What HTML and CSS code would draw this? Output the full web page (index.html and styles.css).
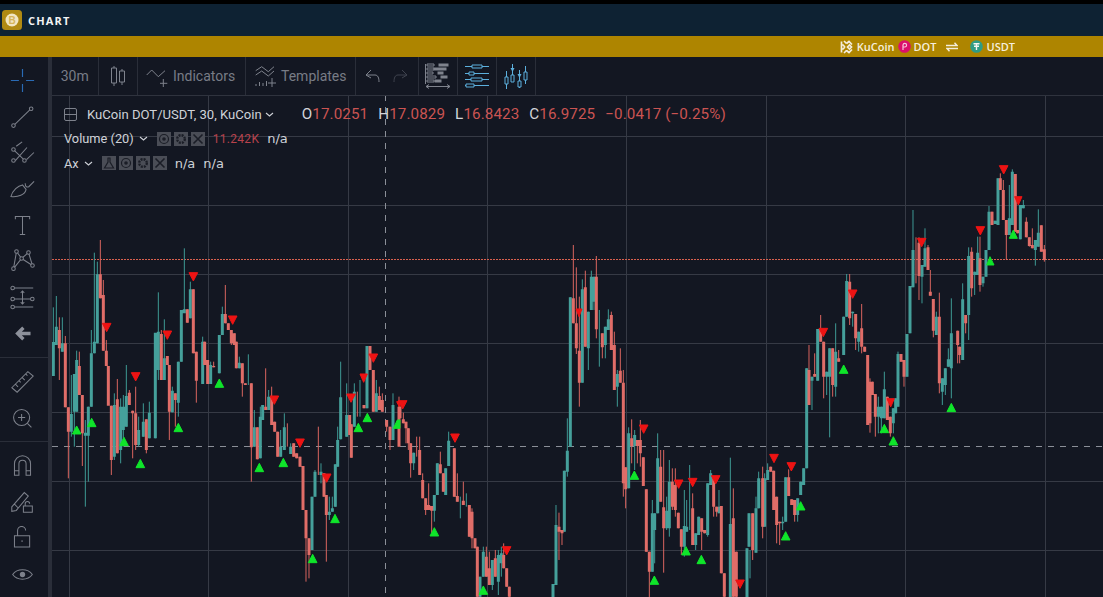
FILE: index.html
```html
<!DOCTYPE html>
<html lang="en">
<head>
<meta charset="utf-8">
<title>Chart</title>
<link rel="stylesheet" href="styles.css">
</head>
<body>
<div class="app">
  <header class="topbar">
    <span class="logo"><svg width="22" height="22" viewBox="0 0 22 22"><rect width="20" height="20" x="1" y="1" rx="3.500" fill="#b08a12"/><circle cx="11" cy="11" r="6.500" fill="#f2e6c2"/><text x="11" y="14.500" class="logo-b">B</text></svg></span>
    <span class="brand">CHART</span>
  </header>
  <div class="goldbar">
    <svg class="gold-ic ku" width="13" height="14" viewBox="0 0 13 14"><path d="M1.500 1.500V12.500M5 7L2.500 4.500M5 7L2.500 9.500M6.500 3.500L4 1M6.500 10.500L4 13M6.500 3.500L9 1.500L12 4.500M6.500 10.500L9 12.500L12 9.500M7.500 7L9.500 5L11.500 7L9.500 9Z" fill="none" stroke="#f4eddc" stroke-width="1.700"/></svg>
    <span>KuCoin</span>
    <svg class="gold-ic" width="13" height="13" viewBox="0 0 13 13"><circle cx="6.500" cy="6.500" r="6.300" fill="#dc0f6c"/><path d="M5 10V5A1.800 1.800 0 1 1 7 7H5.500" fill="none" stroke="#f6c6dc" stroke-width="1.200"/></svg>
    <span>DOT</span>
    <svg class="swap" width="12" height="10" viewBox="0 0 12 10"><path d="M0 3.500H11L8.500 .8M12 6.500H1L3.500 9.200" fill="none" stroke="#f4eddc" stroke-width="1.400"/></svg>
    <svg class="gold-ic tether" width="13" height="13" viewBox="0 0 13 13"><circle cx="6.500" cy="6.500" r="6.300" fill="#2f9c85"/><path d="M3.500 3.800H9.500M6.500 3.800V10M4 6.300H9" fill="none" stroke="#f4f4f0" stroke-width="1.400"/></svg>
    <span>USDT</span>
  </div>
  <div class="main">
    <aside class="sidebar">
      <div class="tool-group">
        <svg class="tool cross-tool" viewBox="0 0 28 28"><path d="M1 14H10M18 14H27M14 1V10M14 18V27"/></svg>
        <svg class="tool" viewBox="0 0 28 28"><path d="M5.400 22.800L22.200 6.700"/><circle cx="3.900" cy="24.200" r="2"/><circle cx="23.700" cy="5.300" r="2"/></svg>
        <svg class="tool" viewBox="0 0 28 28"><path d="M7 7L13.600 2M6 23L19 8.400M18.500 22L26.800 14M5 12L15 21.500"/><circle cx="3.900" cy="10.600" r="2"/><circle cx="3.900" cy="23" r="2"/><circle cx="16.200" cy="23" r="2"/></svg>
        <svg class="tool" viewBox="0 0 28 28"><path d="M1 23C3 16 9 11 14 10L18 15C17 21 9 24 1 23ZM17 8C17 12 19 13 21 12L27 6"/></svg>
        <svg class="tool" viewBox="0 0 28 28"><path d="M6 7V4H22V7M14 4V24M11 24H17"/></svg>
        <svg class="tool" viewBox="0 0 28 28"><path d="M7.300 2.800L13 10.600L20.700 3.900L25.200 18.500L13 10.600L3.900 22ZM7.300 2.800L3.900 22"/><circle class="fill-bg" cx="3.900" cy="22" r="2"/><circle class="fill-bg" cx="7.300" cy="2.800" r="2"/><circle class="fill-bg" cx="13" cy="10.600" r="2"/><circle class="fill-bg" cx="20.700" cy="3.900" r="2"/><circle class="fill-bg" cx="25.200" cy="18.500" r="2"/></svg>
        <svg class="tool" viewBox="0 0 28 28"><path d="M5 3.400H26M5 15.700H23M5 24.600H26M14 6.700V21.300M12 8.700L14 6.700L16 8.700M12 19.300L14 21.300L16 19.300"/><circle cx="3" cy="3.400" r="2"/><circle cx="3" cy="15.700" r="2"/><circle cx="25" cy="15.700" r="2"/><circle cx="3" cy="24.600" r="2"/></svg>
        <svg class="tool tool-arrow" viewBox="0 0 28 28"><path d="M23 14H9M15 7.500L8.500 14L15 20.500"/></svg>
      </div>
      <div class="tool-group">
        <svg class="tool" viewBox="0 0 28 28"><path d="M2 21L20 3L26 8L8 26ZM6 17L9 20M10 13L12 15M13.500 9.500L16.500 12.500M17.500 5.500L19.500 7.500"/></svg>
        <svg class="tool" viewBox="0 0 28 28"><circle cx="13" cy="14" r="9"/><path d="M19.500 20.500L24 25M9 14H17M13 10V18"/></svg>
      </div>
      <div class="tool-group tool-group-last">
        <svg class="tool" viewBox="0 0 28 28"><path d="M5 25V12A9 9 0 0 1 23 12V25H18V12A4 4 0 0 0 10 12V25ZM5 20H10M18 20H23"/></svg>
        <svg class="tool" viewBox="0 0 28 28"><path d="M2 20L16 4L20.500 8L7 24L2 25ZM5 17L9 21M15 26V19H25V26ZM17 19V16.500A2.500 2.500 0 0 1 22 16.500"/></svg>
        <svg class="tool" viewBox="0 0 28 28"><path d="M5 11H22V23.500H5ZM8.500 11V5A4.500 4.500 0 0 1 17.500 5M13.500 16V18"/></svg>
        <svg class="tool" viewBox="0 0 28 28"><path d="M3 14C8 7 20 7 25 14C20 21 8 21 3 14Z"/><circle class="dot" cx="14" cy="14" r="3"/></svg>
      </div>
    </aside>
    <div class="workspace">
      <nav class="toolbar">
        <span class="tb-item tb-text">30m</span>
        <span class="tb-item tb-icon"><svg class="tb-svg" width="14" height="20" viewBox="0 0 14 20"><path d="M3 0V2M3 17V20M.5 2H5.500V17H.5ZM11 3V5M11 16V19M8.500 5H13.500V16H8.500Z"/></svg></span>
        <span class="tb-item tb-label"><svg class="tb-svg" width="22" height="22" viewBox="0 0 22 22"><path d="M.7 10L5.700 5L12.300 11.700L19 5.700M14 18.300H21.300M17.300 14V22"/></svg>Indicators</span>
        <span class="tb-item tb-label"><svg class="tb-svg" width="22" height="22" viewBox="0 0 22 22"><path d="M.7 5.700L6.700 1.700L13.300 6.700L19 1.700M.7 10L6.700 6L13.300 11L19 6M1 19V21M4.500 17V21M8 18V21M11.500 16V21M13 18H21M17 13V22"/></svg>Templates</span>
        <span class="tb-item tb-undo">
          <svg class="tb-svg" width="16" height="14" viewBox="0 0 16 14"><path d="M6 1L1 6L6 9M1 6H10C13 6 14 9 14 13"/></svg>
          <svg class="tb-svg faded" width="16" height="14" viewBox="0 0 16 14"><path d="M10 1L15 6L10 9M15 6H6C3 6 2 9 2 13"/></svg>
        </span>
        <span class="tb-item tb-big"><svg class="tb-svg" width="26" height="28" viewBox="0 0 26 28"><path d="M.5 2V22M2 2H9V4H2ZM2 6H9V8H2ZM2 10H8V12H2ZM2 14H11V16H2ZM2 18H9V20H2ZM1 24.500H25M1 24.500L4 22.500M1 24.500L4 26.500M25 24.500L22 22.500M25 24.500L22 26.500"/><path class="solid" d="M13.500 1.500H23.500V4.500H13.500ZM8.500 5.500H21.500V8.500H8.500ZM12.500 9.500H18.500V12.500H12.500ZM15.500 13.500H22.500V16.500H15.500ZM9.500 17.500H16.500V20.500H9.500Z"/></svg></span>
        <span class="tb-item tb-big"><svg class="tb-svg blue" width="26" height="26" viewBox="0 0 26 26"><path d="M1 3.500H25M1 10.500H25M1 16.500H25M1 22.500H25"/><path class="blue-box" d="M8 2H18V5H8ZM5 9H10V12H5ZM7 15H18V18H7ZM2 21H10V24H2Z"/></svg></span>
        <span class="tb-item tb-big"><svg class="tb-svg blue" width="24" height="26" viewBox="0 0 24 26"><path d="M2.500 8V26M8.500 1V19M15.500 7V25M21.500 3V21"/><path class="blue-box" d="M1 14H4V21H1ZM7 12H10V19H7ZM14 18H17V24H14ZM20 9H23V17H20Z"/><path class="blue-solid" d="M6.500 5H10.500L8.500 9ZM13.500 11H17.500L15.500 15Z"/></svg></span>
      </nav>
      <section class="chart">
        <svg class="plot" width="1051" height="501" viewBox="52 96 1051 501">
          <path class="grid" d="M69.500 95V597M208.500 95V597M348.500 95V597M487.500 95V597M626.500 95V597M766.500 95V597M905.500 95V597M1045.500 95V597M52 136.500H1103M52 205.500H1103M52 274.500H1103M52 343.500H1103M52 412.500H1103M52 481.500H1103M52 550.500H1103"/>
          <path class="cross" d="M385.500 95V597M52 446.500H1103"/>
          <path class="last" d="M52 259.500H1103"/>
          <g transform="translate(50 230) scale(.33333)">
            <path class="w-g" d="M10 232V438M19 198V345M37 262V365M64 435V620M73 432V650M80 362V545M106 570V830M115 530V755M124 300V530M133 68V370M142 95V340M193 490V690M212 505V700M220 495V650M229 405V590M266 560V650M280 520V620M298 515V625M316 340V625M325 187V450M343 268V450M367 470V547M385 395V560M394 240V395M403 55V240M421 155V265M458 320V462M482 395V462M508 315V430M517 230V315M568 380V415M595 373V465M613 540V650M631 530V685M638 525V570M656 480V540M692 600V680M703 550V660M722 640V672M786 800V960M795 720V800M813 700V760M838 800V870M847 800V845M856 703V830M863 590V710M872 395V628M890 460V620M913 460V590M930 450V560M951 348V535M979 450V545M1029 490V630"/>
            <path class="b-g" d="M10 336V438M19 290V345M37 340V365M64 552V605M73 432V545M80 390V545M106 608V617M115 530V617M124 370V530M133 335V370M142 133V340M193 525V680M212 530V660M220 530V600M229 498V590M266 600V645M280 575V620M298 548V625M316 308V625M325 305V420M343 385V450M367 482V547M385 395V518M394 240V395M403 238V250M421 178V265M458 335V462M482 405V462M508 315V430M517 252V315M568 398V415M613 592V650M631 560V685M638 525V570M656 500V540M692 650V680M703 592V660M722 650V672M786 800V960M795 725V800M813 725V735M838 845V855M847 835V845M856 703V830M863 630V710M872 502V628M890 555V620M913 485V590M951 348V535M979 490V545M1029 525V630"/>
            <path class="w-r" d="M28 262V450M46 318V532M55 532V745M88 365V495M97 495V708M151 30V205M160 150V362M169 330V408M184 527V735M202 447V670M238 480V525M248 542V685M257 470V660M289 568V670M334 300V450M352 378V405M358 405V630M376 490V590M412 238V278M430 178V370M439 365V518M464 335V405M473 390V462M491 395V412M526 165V280M535 280V300M544 300V345M553 310V345M559 335V415M577 400V500M586 460V465M604 460V755M622 592V688M647 415V540M665 470V585M674 575V605M683 605V680M712 580V650M731 640V680M740 670V685M750 680V710M759 708V840M768 840V1055M777 925V1045M805 590V735M822 730V800M829 795V995M899 555V615M904 583V683M922 485V560M942 525V535M960 348V420M970 420V545M988 470V540M997 490V545M1010 570V605M1020 590V660M1047 500V650"/>
            <path class="b-r" d="M28 300V355M46 340V532M55 532V605M88 408V495M97 495V610M151 133V205M160 195V362M169 362V408M175 408V527M184 527V690M202 508V670M238 488V525M248 542V550M257 550V645M289 568V660M334 312V450M352 378V405M358 405V545M376 490V510M412 238V278M430 178V370M439 365V452M464 335V405M473 390V462M491 408V412M526 252V280M535 280V300M544 300V340M553 310V345M559 335V415M577 400V460M586 460V465M604 460V652M622 592V688M647 530V540M665 500V585M674 575V605M683 605V680M731 640V680M740 670V685M750 680V710M759 708V840M768 840V925M777 925V975M822 730V800M829 795V855M899 555V615M904 583V683M942 525V535M960 348V420M970 420V545M988 498V540M997 510V545M1010 570V590M1020 590V630M1047 530V650"/>
            <path class="tri-d" d="M417 128H443L430 153ZM157 280H183L170 305ZM339 303H365L352 328ZM244 428H270L257 453ZM535 258H561L548 283ZM660 498H686L673 523ZM737 627H763L750 652ZM817 732H843L830 757ZM890 492H916L903 517ZM930 432H952L941 457ZM957 372H983L970 397ZM1040 515H1050V535Z"/>
            <path class="tri-u" d="M67 612H93L80 588ZM112 590H138L125 565ZM209 647H235L222 622ZM258 713H284L271 688ZM372 605H398L385 580ZM495 472H521L508 447ZM615 725H641L628 700ZM687 710H713L700 685ZM775 998H801L788 973ZM842 878H868L855 853ZM912 605H938L925 580ZM939 575H965L952 550ZM1030 595H1050V570H1042Z"/>
          </g>
          <g transform="translate(400 230) scale(.33333)">
            <path class="w-g" d="M41 668V720M103 795V875M112 700V795M137 715V795M146 605V708M181 800V865M199 790V830M240 1040V1101M250 950V1040M277 990V1080M295 960V1095M304 950V1040M459 1062V1101M468 825V1065M493 722V905M502 565V740M511 202V650M547 148V458M565 245V420M574 122V240M582 140V240M598 240V410M616 290V385M625 238V300M652 420V530M686 592V775M704 600V720M757 810V1025M764 850V1000M773 610V850M800 800V900M808 690V920M853 780V980M860 810V905M869 705V900M887 910V960M896 860V915M923 760V920M932 720V765M957 780V850M991 683V1101M1041 955V1101M1047 850V950"/>
            <path class="b-g" d="M41 668V700M103 795V842M112 700V795M137 715V795M146 632V708M240 1040V1100M250 965V1040M277 990V1065M295 975V1055M304 970V1000M459 1062V1101M468 885V1065M493 722V905M502 662V725M511 202V650M547 178V458M565 245V355M574 140V240M582 140V215M616 290V345M625 268V300M652 432V470M686 610V775M704 615V648M757 850V1025M764 850V900M773 685V850M800 842V895M808 755V895M853 888V950M860 890V905M887 910V945M896 860V915M923 760V915M932 730V765M957 830V850M991 882V1101M1041 955V1101M1047 850V950"/>
            <path class="w-r" d="M0 530V565M10 548V580M18 575V640M25 595V660M32 640V743M50 620V680M59 620V735M68 730V805M77 805V855M86 760V840M95 828V910M121 665V730M130 730V785M163 655V800M172 730V815M190 755V825M208 825V920M216 835V955M225 925V955M232 950V1101M259 950V1040M268 965V1065M286 960V1040M311 940V1015M320 1015V1070M328 1070V1101M477 848V990M486 900V945M520 45V280M529 112V372M538 200V530M556 122V350M589 78V325M607 310V385M634 245V360M643 305V480M661 355V458M670 420V800M677 712V835M695 568V700M712 630V700M721 570V710M730 682V768M739 778V965M748 965V1101M782 660V815M791 660V1028M817 715V840M826 715V860M835 848V895M844 898V975M878 790V945M905 865V960M914 900V910M941 740V860M950 830V860M964 828V1030M973 1030V1101M1000 775V1101M1009 965V1101"/>
            <path class="b-r" d="M0 530V565M10 568V580M18 575V595M25 595V640M32 640V700M59 660V735M68 750V805M77 805V840M86 825V840M95 828V842M121 703V730M130 730V785M163 655V800M172 798V815M190 812V825M208 825V920M216 845V925M225 925V955M232 950V1100M259 980V1040M268 1015V1065M286 985V1040M311 975V1015M320 1015V1070M328 1070V1100M477 890V905M486 900V910M520 205V280M529 280V355M538 362V458M556 172V350M589 140V298M607 310V352M634 255V360M643 345V480M661 422V458M670 458V760M677 712V778M695 625V648M712 630V648M721 630V670M730 682V768M739 778V965M748 965V1025M782 710V815M791 832V895M817 755V830M826 765V840M835 848V895M844 898V950M878 835V945M905 865V905M914 900V910M941 740V830M950 830V845M964 828V1030M973 1030V1100M1000 865V1100M1009 965V1100"/>
            <path class="tri-d" d="M-5 512H21L8 537ZM152 612H178L165 637ZM307 950H333L320 975ZM528 237H546L537 260ZM718 585H744L731 610ZM823 750H849L836 775ZM865 745H891L878 770ZM934 737H960L947 762ZM1007 1050H1033L1020 1075Z"/>
            <path class="tri-u" d="M90 918H116L103 893ZM237 1093H263L250 1068ZM690 748H716L703 723ZM750 1063H776L763 1038ZM845 975H871L858 950ZM891 1001H917L904 976Z"/>
          </g>
          <g transform="translate(750 150) scale(.33333)">
            <path class="w-g" d="M0 1200V1285M18 1040V1208M26 965V1075M44 970V1130M53 940V990M98 1100V1140M107 982V1115M143 1045V1115M152 995V1035M161 955V1005M170 655V955M186 680V780M203 537V692M230 665V735M239 595V862M257 520V740M281 500V615M290 372V500M308 485V530M326 545V605M385 740V850M394 770V850M403 665V805M430 775V850M437 745V790M444 605V770M471 552V680M480 408V550M489 180V412M516 345V460M525 235V350M559 485V555M577 685V765M586 655V735M595 595V650M604 445V745M638 400V630M656 292V570M674 365V435M683 260V375M699 380V410M708 300V380M717 168V300M735 212V222M744 85V225M778 105V255M787 58V225M811 165V268M820 150V175M856 270V347M865 178V290"/>
            <path class="b-g" d="M18 1075V1208M26 985V1075M44 985V1130M53 960V990M98 1115V1120M107 982V1115M143 1045V1095M152 995V1035M161 955V1005M170 655V955M186 680V692M203 537V692M230 665V680M239 595V680M257 605V710M281 500V615M290 393V500M308 485V490M326 545V575M385 770V800M394 770V805M403 718V805M430 775V820M437 745V790M444 612V770M471 552V680M480 408V550M489 300V412M516 345V380M525 295V350M559 500V555M577 685V725M586 655V705M595 628V650M604 550V655M638 448V630M656 318V495M674 365V375M683 308V375M699 380V400M708 300V380M717 185V300M735 212V222M744 85V225M778 205V255M787 65V225M811 165V268M820 165V175M856 270V300M865 248V290"/>
            <path class="w-r" d="M8 1090V1230M38 950V1165M62 950V965M71 962V1080M80 1040V1180M89 1115V1185M116 958V1038M125 1048V1065M134 1050V1115M177 585V765M194 610V680M212 495V575M221 575V745M248 595V740M266 600V635M299 372V525M317 492V600M335 462V610M344 590V605M353 615V825M360 685V848M367 695V735M376 732V860M412 740V810M421 800V860M453 612V635M462 630V710M498 262V400M507 262V450M534 285V360M541 360V437M550 447V562M568 428V730M623 542V640M629 590V640M647 495V550M665 292V440M690 260V425M726 185V225M751 70V120M760 90V210M769 210V330M796 72V245M803 240V250M829 202V262M838 262V290M847 235V295M874 226V305M883 285V335"/>
            <path class="b-r" d="M8 1090V1200M38 985V1130M62 950V965M71 962V1080M80 1040V1125M89 1115V1120M116 982V1038M125 1048V1065M134 1050V1095M177 660V765M194 672V680M212 537V575M221 575V680M248 595V705M266 625V635M299 395V505M317 492V565M335 535V590M344 590V605M353 615V825M360 695V820M367 695V735M376 732V800M412 740V810M421 800V850M453 612V635M462 630V680M507 278V378M534 292V360M541 425V437M550 447V542M568 500V700M623 542V585M629 590V615M647 495V520M665 305V415M690 325V405M726 185V225M751 85V120M760 120V210M769 210V255M796 72V245M803 240V250M829 215V262M838 262V288M847 285V295M874 226V305M883 298V330"/>
            <path class="tri-d" d="M59 913H85L72 938ZM111 938H137L124 963ZM207 535H233L220 560ZM295 420H321L308 445ZM411 746H433L422 771ZM502 265H528L515 290ZM678 230H704L691 255ZM748 47H774L761 72ZM794 140H816L805 165Z"/>
            <path class="tri-u" d="M94 1170H120L107 1145ZM139 1080H165L152 1055ZM268 670H294L281 645ZM390 848H416L403 823ZM417 885H443L430 860ZM591 785H617L604 760ZM710 345H732L720 320ZM778 265H802L790 240Z"/>
          </g>
        </svg>
        <div class="legend">
          <div class="legend-row">
            <span class="collapse"></span>
            <span class="symbol">KuCoin DOT/USDT, 30, KuCoin</span>
            <svg class="chev" width="9" height="5" viewBox="0 0 9 5"><path d="M1 1L4.500 4L8 1"/></svg>
            <span class="ohlc"><b>O</b>17.0251</span>
            <span class="ohlc"><b>H</b>17.0829</span>
            <span class="ohlc"><b>L</b>16.8423</span>
            <span class="ohlc"><b>C</b>16.9725</span>
            <span class="ohlc">−0.0417 (−0.25%)</span>
          </div>
          <div class="legend-row small">
            <span class="study">Volume (20)</span>
            <svg class="chev" width="9" height="5" viewBox="0 0 9 5"><path d="M1 1L4.500 4L8 1"/></svg>
            <span class="btns">
              <svg class="btn" viewBox="0 0 14 14"><circle cx="7" cy="7" r="4.500"/><circle class="btn-dot" cx="7" cy="7" r="1.800"/></svg>
              <svg class="btn" viewBox="0 0 14 14"><circle cx="7" cy="7" r="3.800" stroke-width="2.400" stroke-dasharray="2 1"/></svg>
              <svg class="btn" viewBox="0 0 14 14"><path d="M2.500 2.500L11.500 11.500M11.500 2.500L2.500 11.500" stroke-width="1.600"/></svg>
            </span>
            <span class="val-red">11.242K</span>
            <span class="val">n/a</span>
          </div>
          <div class="legend-row small">
            <span class="study">Ax</span>
            <svg class="chev" width="9" height="5" viewBox="0 0 9 5"><path d="M1 1L4.500 4L8 1"/></svg>
            <span class="btns">
              <svg class="btn" viewBox="0 0 14 14"><path d="M5.500 2H8.500M6 2V6L2.500 12H11.500L8 6V2"/></svg>
              <svg class="btn" viewBox="0 0 14 14"><circle cx="7" cy="7" r="4.500"/><circle class="btn-dot" cx="7" cy="7" r="1.800"/></svg>
              <svg class="btn" viewBox="0 0 14 14"><circle cx="7" cy="7" r="3.800" stroke-width="2.400" stroke-dasharray="2 1"/></svg>
              <svg class="btn" viewBox="0 0 14 14"><path d="M2.500 2.500L11.500 11.500M11.500 2.500L2.500 11.500" stroke-width="1.600"/></svg>
            </span>
            <span class="val">n/a</span>
            <span class="val">n/a</span>
          </div>
        </div>
      </section>
    </div>
  </div>
</div>
</body>
</html>
```
FILE: styles.css
```css
* { box-sizing: border-box; }
html, body { margin: 0; height: 100%; overflow: hidden; background: #131722; }
body { font-family: Roboto, "Liberation Sans", sans-serif; }
.app { display: flex; flex-direction: column; height: 597px; width: 1103px; }
.topbar { height: 36px; flex: none; border-top: 4px solid #000; background: #0e2233; display: flex; align-items: center; padding-left: 1px; gap: 5px; }
.logo { display: flex; }
.logo-b { font: bold 10px "Liberation Sans", sans-serif; fill: #d6b55a; text-anchor: middle; }
.brand { color: #f2f4f5; font: 700 11px "Open Sans", sans-serif; letter-spacing: 1.2px; }
.goldbar { height: 21px; flex: none; background: #ae8500; display: flex; align-items: center; justify-content: flex-end; padding-right: 88px; gap: 3px; color: #f6efdd; font: 600 11px "Open Sans", sans-serif; }
.ku { margin-right: 1px; }
.swap { margin: 0 9px 0 6px; }
.tether { margin-right: 1px; }
.main { display: flex; flex: 1; min-height: 0; }
.sidebar { width: 52px; flex: none; background: #131722; border-right: 4px solid #2a2e39; display: flex; flex-direction: column; }
.tool-group { display: flex; flex-direction: column; padding: 11px 4px 11px 0; gap: 11.140px; align-items: center; border-bottom: 1px solid #2a2e39; }
.tool-group-last { border-bottom: 0; gap: 11.400px; }
.tool { width: 25px; height: 25px; fill: none; stroke: #7d818b; stroke-width: 1.150; flex: none; }
.cross-tool { stroke: #2a6bb5; stroke-width: 1.300; }
.tool-arrow { stroke: #8c909a; stroke-width: 3.800; }
.fill-bg { fill: #131722; }
.dot { fill: #7d818b; stroke: none; }
.workspace { flex: 1; min-width: 0; display: flex; flex-direction: column; }
.toolbar { height: 39px; flex: none; display: flex; border-bottom: 1px solid #2f333e; color: #787c86; font-size: 14px; }
.tb-item { display: flex; align-items: center; justify-content: center; border-right: 1px solid #2a2e39; gap: 5px; flex: none; }
.tb-text { width: 46.500px; }
.tb-icon { width: 39.500px; }
.tb-label { padding: 0 0 0 8px; width: 108px; justify-content: flex-start; }
.tb-label + .tb-label { width: 110px; padding-left: 9px; gap: 4px; }
.tb-undo { width: 62.500px; gap: 11px; }
.tb-big { width: 39.300px; }
.tb-svg { fill: none; stroke: #7f838d; stroke-width: 1; flex: none; }
.solid { fill: #7f838d; stroke: none; }
.faded { stroke: #3f434e; }
.blue { stroke: #5cb0dd; }
.blue-box { fill: #131722; }
.blue-solid { fill: #5cb0dd; stroke: none; }
.chart { flex: 1; position: relative; overflow: hidden; background: #131722; min-height: 0; }
.plot { display: block; }
.grid { stroke: #363a45; stroke-width: 1; fill: none; }
.cross { stroke: #8b8f98; stroke-width: 1; stroke-dasharray: 6 6; fill: none; }
.last { stroke: #d8604e; stroke-width: 1; stroke-dasharray: 2 1; fill: none; }
.w-g { stroke: #3e9a96; stroke-width: 3; fill: none; }
.b-g { stroke: #45a09b; stroke-width: 9; fill: none; }
.w-r { stroke: #d9645f; stroke-width: 3; fill: none; }
.b-r { stroke: #e06d68; stroke-width: 9; fill: none; }
.tri-d { fill: #ee1313; stroke: #ee1313; stroke-width: 3; }
.tri-u { fill: #0fe52a; stroke: #0fe52a; stroke-width: 3; }
.legend { position: absolute; left: 12px; top: 6px; display: flex; flex-direction: column; color: #cfd2d8; }
.legend-row { display: flex; align-items: center; height: 24.500px; }
.collapse { width: 13px; height: 13px; border: 1px solid #7d818b; border-radius: 2px; margin-right: 10px; background: linear-gradient(#7d818b, #7d818b) center / 100% 1px no-repeat; }
.symbol { font-size: 13.100px; color: #cfd2d8; margin-right: 3px; }
.chev { fill: none; stroke: #cfd2d8; stroke-width: 1.100; margin-right: 28px; flex: none; }
.ohlc { color: #cb5452; font-size: 15.200px; margin-right: 10px; letter-spacing: .1px; }
.ohlc b { font-weight: 400; color: #d3d5da; }
.small { font-size: 12.800px; }
.small .chev { margin: 0 9px 0 5px; }
.btns { display: flex; gap: 3px; margin-right: 8px; }
.btn { width: 14px; height: 14px; background: #4a4d56; fill: none; stroke: #1a1d26; stroke-width: 1.200; flex: none; }
.btn-dot { fill: #1a1d26; stroke: none; }
.val-red { color: #b8424c; font-size: 12px; letter-spacing: .3px; margin-right: 8px; }
.val { margin-right: 8px; font-family: "DejaVu Sans", sans-serif; font-size: 13px; color: #cfd2d8; }
```
